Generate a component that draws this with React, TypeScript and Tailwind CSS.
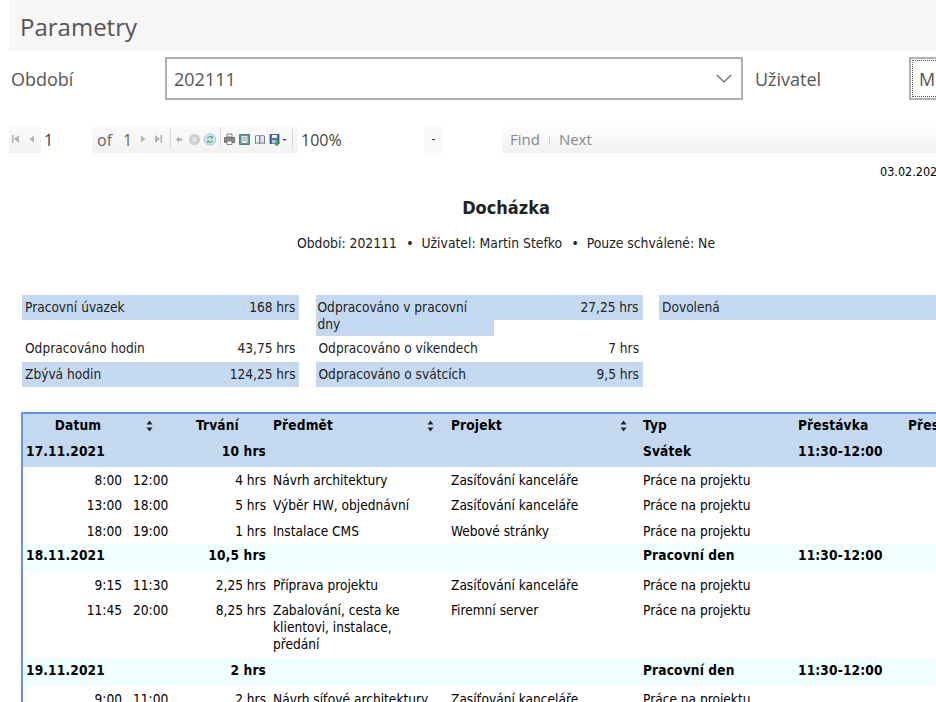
import { ReactNode } from 'react';

const reportFont = { fontFamily: '"DejaVu Sans Condensed", "DejaVu Sans", sans-serif' };

type Entry = {
  from: string;
  to: string;
  hours: string;
  subject: ReactNode;
  project: string;
  wrapped?: boolean;
};

type Day = {
  date: string;
  hours: string;
  type: string;
  pause: string;
  rowCls: string;
  cellPt: string;
  entries: Entry[];
};

const days: Day[] = [
  {
    date: '17.11.2021',
    hours: '10 hrs',
    type: 'Svátek',
    pause: '11:30-12:00',
    rowCls: 'bg-[#c4d9f0] h-[27px]',
    cellPt: 'pt-[3px]',
    entries: [
      { from: '8:00', to: '12:00', hours: '4 hrs', subject: 'Návrh architektury', project: 'Zasíťování kanceláře' },
      { from: '13:00', to: '18:00', hours: '5 hrs', subject: 'Výběr HW, objednávní', project: 'Zasíťování kanceláře' },
      { from: '18:00', to: '19:00', hours: '1 hrs', subject: 'Instalace CMS', project: 'Webové stránky' },
    ],
  },
  {
    date: '18.11.2021',
    hours: '10,5 hrs',
    type: 'Pracovní den',
    pause: '11:30-12:00',
    rowCls: 'bg-[#f0ffff] h-[28px]',
    cellPt: 'pt-[3px]',
    entries: [
      { from: '9:15', to: '11:30', hours: '2,25 hrs', subject: 'Příprava projektu', project: 'Zasíťování kanceláře' },
      {
        from: '11:45',
        to: '20:00',
        hours: '8,25 hrs',
        subject: 'Zabalování, cesta ke klientovi, instalace, předání',
        project: 'Firemní server',
        wrapped: true,
      },
    ],
  },
  {
    date: '19.11.2021',
    hours: '2 hrs',
    type: 'Pracovní den',
    pause: '11:30-12:00',
    rowCls: 'bg-[#f0ffff] h-[28px]',
    cellPt: 'pt-[4px]',
    entries: [
      { from: '9:00', to: '11:00', hours: '2 hrs', subject: 'Návrh síťové architektury', project: 'Zasíťování kanceláře' },
    ],
  },
];

function SortIcon() {
  return (
    <svg width="7" height="12" viewBox="0 0 7 12" className="inline-block">
      <path d="M3.500 0.500 L6.500 4.500 H0.500 Z M0.500 7.500 H6.500 L3.500 11.500 Z" fill="#222" />
    </svg>
  );
}

function Sep() {
  return <div className="w-px h-[20px] bg-[#d8d8d8]" />;
}

function ToolbarIcons() {
  return (
    <svg width="289" height="27" viewBox="0 0 289 27" className="absolute left-0 top-0">
      <g fill="#b4b4b4">
        <path d="M3 9h1.600v8H3z M10 9v8l-5-4z" />
        <path d="M25 9.500v7l-4.500-3.500z" />
        <path d="M132 9.500v7l4.500-3.500z" />
        <path d="M146 9v8l5-4z M151.500 9h1.600v8h-1.600z" />
      </g>
      <path d="M167 13.500l3-3v2h3v2h-3v2z" fill="#a9a9a9" />
      <circle cx="185.500" cy="13.500" r="5.500" fill="#cfcfcf" />
      <path d="M183.500 11.500l4 4m0-4l-4 4" stroke="#f2f2f2" strokeWidth="1.200" />
      <circle cx="201" cy="13.500" r="5.700" fill="#d3e8f8" stroke="#8fbadb" strokeWidth="0.800" />
      <path d="M198.300 12.500a3 3 0 0 1 4.900-1" fill="none" stroke="#4fae5a" strokeWidth="1.100" />
      <path d="M204 9.800v2.800h-2.800z" fill="#4fae5a" />
      <path d="M203.700 14.500a3 3 0 0 1-4.900 1" fill="none" stroke="#4fae5a" strokeWidth="1.100" />
      <path d="M198 17.200v-2.800h2.800z" fill="#4fae5a" />
      <path d="M218 8h5v3h-5z" fill="#f4f4f4" stroke="#6d6d6d" strokeWidth="0.800" />
      <path d="M215.500 11.500h10v5h-10z" fill="#8a8a8a" stroke="#5e5e5e" strokeWidth="0.800" />
      <path d="M218 15h5v3.500h-5z" fill="#fff" stroke="#6d6d6d" strokeWidth="0.800" />
      <path d="M230.500 8.500h10v10h-10z" fill="#5f9c8d" stroke="#4a7f8d" />
      <path d="M232.500 10h6v7h-6z" fill="#dfe7ea" />
      <path d="M233.500 11.500h4m-4 1.500h4m-4 1.500h4" stroke="#8aa0aa" strokeWidth="0.600" />
      <path d="M246.500 10c1.500-.7 3-.7 4.300 0v7.500c-1.300-.7-2.800-.7-4.300 0z" fill="#f2f2f2" stroke="#66707a" strokeWidth="0.900" />
      <path d="M250.800 10c1.300-.7 3-.7 4.700 0v7.500c-1.700-.7-3.400-.7-4.700 0z" fill="#e2e6ea" stroke="#66707a" strokeWidth="0.900" />
      <path d="M261 8.500h9v9h-9z" fill="#4a6db2" stroke="#2f4a86" strokeWidth="0.800" />
      <path d="M263 9h5v3h-5z" fill="#e8edf5" />
      <path d="M263 14h5v3.400h-5z" fill="#b9c7df" />
      <path d="M266.500 14.500h2.500v2.500h2l-3.200 3.300-3.300-3.300h2z" fill="#3ea23e" />
      <path d="M273.500 13h4l-2 2z" fill="#333" />
    </svg>
  );
}

function Toolbar() {
  const textCls = 'text-[16px] text-[#444]';
  return (
    <div
      className="flex h-[27px] mt-[26px] ml-[9px] w-[1000px]"
      style={{ fontFamily: '"Open Sans", sans-serif' }}
    >
      <div className="relative w-[289px] h-full bg-gradient-to-b from-[#fafafa] to-[#f2f2f2]">
        <ToolbarIcons />
        <div className={`absolute left-[32px] top-0 w-[51px] h-full bg-white pl-[3px] leading-[29px] ${textCls}`}>1</div>
        <span className={`absolute left-[88px] top-0 leading-[29px] ${textCls} text-[#666]`}>of</span>
        <span className={`absolute left-[114px] top-0 leading-[29px] ${textCls} text-[#666]`}>1</span>
        <div className="absolute left-[161px] top-[3px]"><Sep /></div>
        <div className="absolute left-[211px] top-[1px]"><Sep /></div>
        <div className="absolute left-[283px] top-[3px]"><Sep /></div>
      </div>
      <div className={`w-[126px] pl-[3px] leading-[29px] ${textCls}`}>100%</div>
      <div className="w-[19px] h-full bg-[#f9f9f9] flex items-center justify-center">
        <div className="w-[3px] h-px bg-[#333]" />
      </div>
      <div className="w-[59px]" />
      <div className="flex-1 h-full bg-gradient-to-b from-[#fdfdfd] to-[#f1f1f1] flex items-center pl-[8px] text-[15px] text-[#888]">
        <span>Find</span>
        <div className="w-px h-[8px] bg-[#ccc] mx-[9px]" />
        <span>Next</span>
      </div>
    </div>
  );
}

function PlainCell({ label, value }: { label: string; value: string }) {
  return (
    <div className="flex justify-between pl-[3px] pr-[3.500px] pt-[4px] leading-[17px]">
      <span>{label}</span>
      <span>{value}</span>
    </div>
  );
}

function BlueCell({ label, value }: { label: string; value?: string }) {
  return (
    <div className="flex justify-between h-[25px] bg-[#c4d9f0] pl-[3px] pr-[3.500px] pt-[4px] leading-[17px]">
      <span>{label}</span>
      {value && <span>{value}</span>}
    </div>
  );
}

function Summary() {
  return (
    <div className="grid grid-cols-[277px_327px_277px] grid-rows-[41px_26px_25px] gap-x-[16.500px] mt-[43px] ml-[22px] text-[13.600px] text-[#222]">
      <BlueCell label="Pracovní úvazek" value="168 hrs" />
      <div className="flex items-start">
        <div className="w-[178px] h-[41px] bg-[#c4d9f0] pl-[2px] pr-[3px] pt-[4px] leading-[17px]">
          Odpracováno v pracovní dny
        </div>
        <div className="flex-1 h-[25px] bg-[#c4d9f0] pr-[4px] pt-[4px] leading-[17px] text-right">27,25 hrs</div>
      </div>
      <BlueCell label="Dovolená" />
      <PlainCell label="Odpracováno hodin" value="43,75 hrs" />
      <PlainCell label="Odpracováno o víkendech" value="7 hrs" />
      <div />
      <BlueCell label="Zbývá hodin" value="124,25 hrs" />
      <BlueCell label="Odpracováno o svátcích" value="9,5 hrs" />
      <div />
    </div>
  );
}

function DayRows({ day }: { day: Day }) {
  return (
    <>
      <tr className={`${day.rowCls} font-bold tracking-[0.15px] align-top`}>
        <td colSpan={2} className={`pl-[3px] ${day.cellPt}`}>{day.date}</td>
        <td className={`text-right pr-[4px] ${day.cellPt}`}>{day.hours}</td>
        <td />
        <td />
        <td className={`pl-[3px] ${day.cellPt}`}>{day.type}</td>
        <td className={`pl-[3px] ${day.cellPt}`}>{day.pause}</td>
        <td />
      </tr>
      {day.entries.map((e, i) => (
        <tr key={i} className="align-top">
          <td className={`text-right pr-[11px] pt-[4.500px] ${i === day.entries.length - 1 ? 'pb-[4.500px]' : 'pb-[4px]'}`}>{e.from}</td>
          <td className="pt-[4.500px]">{e.to}</td>
          <td className="text-right pr-[4px] pt-[4.500px]">{e.hours}</td>
          <td className={`pl-[3px] pr-[13px] pt-[4.500px] ${e.wrapped ? 'pb-[5px]' : 'pb-[4px]'}`}>{e.subject}</td>
          <td className="pl-[4px] pt-[4.500px]">{e.project}</td>
          <td className="pl-[3px] pt-[4.500px]">Práce na projektu</td>
          <td />
          <td />
        </tr>
      ))}
    </>
  );
}

function AttendanceTable() {
  return (
    <div className="mt-[25px] ml-[21px] w-[1000px] border-l-2 border-t-2 border-[#6495ed]">
      <table className="table-fixed w-[998px] border-collapse text-[13.600px] leading-[17px] text-black">
        <colgroup>
          <col className="w-[110px]" />
          <col className="w-[32px]" />
          <col className="w-[105px]" />
          <col className="w-[177px]" />
          <col className="w-[193px]" />
          <col className="w-[155px]" />
          <col className="w-[110px]" />
          <col className="w-[116px]" />
        </colgroup>
        <thead>
          <tr className="bg-[#c4d9f0] font-bold tracking-[0.15px] h-[26px] align-top">
            <th className="text-center font-bold pt-[3px]">Datum</th>
            <th className="text-center pt-[3px]"><SortIcon /></th>
            <th className="text-center font-bold pt-[3px]">Trvání</th>
            <th className="font-bold text-left pl-[3px] pr-[13px] pt-[3px]">
              <div className="flex justify-between items-center">Předmět<SortIcon /></div>
            </th>
            <th className="font-bold text-left pl-[4px] pr-[13px] pt-[3px]">
              <div className="flex justify-between items-center">Projekt<SortIcon /></div>
            </th>
            <th className="font-bold text-left pl-[3px] pt-[3px]">Typ</th>
            <th className="font-bold text-left pl-[3px] pt-[3px]">Přestávka</th>
            <th className="font-bold text-left pl-[3px] pt-[3px]">Přestávka</th>
          </tr>
        </thead>
        <tbody>
          {days.map((d) => <DayRows key={d.date} day={d} />)}
        </tbody>
      </table>
    </div>
  );
}

export default function App() {
  return (
    <main className="w-[936px] h-[702px] overflow-hidden bg-white">
      <div
        className="ml-[9px] w-[927px] h-[51px] bg-[#f7f7f7] pl-[11px] pt-[9px] text-[24px] leading-[36px] text-[#555]"
        style={{ fontFamily: '"Open Sans", sans-serif' }}
      >
        Parametry
      </div>

      <div
        className="flex items-center w-[1100px] mt-[6px] h-[43px] text-[18px] text-[#555]"
        style={{ fontFamily: '"Open Sans", sans-serif' }}
      >
        <div className="w-[165px] pl-[11px] pt-[2px]">Období</div>
        <div className="w-[578px] h-full border-2 border-[#b0b0b0] flex items-center justify-between pl-[7px] pr-[9px]">
          <span className="pt-px">202111</span>
          <svg width="16" height="9" viewBox="0 0 16 9">
            <path d="M1 1l7 7 7-7" fill="none" stroke="#666" strokeWidth="1.200" />
          </svg>
        </div>
        <div className="w-[166px] pl-[12px] pt-[2px]">Uživatel</div>
        <div className="w-[190px] h-full border-2 border-[#b0b0b0] p-px">
          <div className="h-full border border-dotted border-[#555] pl-[6px] pt-px flex items-center">Martin Stefko</div>
        </div>
      </div>

      <Toolbar />

      <section style={reportFont} className="w-[1100px]">
        <div className="pl-[880px] pt-[10px] text-[12.500px] leading-[17px] text-black">03.02.2021</div>
        <h1 className="w-[1012px] text-center font-bold text-[18px] leading-[22px] mt-[17px] text-[#222]">Docházka</h1>
        <p className="w-[1012px] text-center text-[13.800px] leading-[17px] mt-[16px] text-[#222]">
          Období: 202111&nbsp; <span className="ml-[1.500px]">•</span>&nbsp; Uživatel: Martin Stefko&nbsp; <span className="ml-[1.500px]">•</span>&nbsp; Pouze schválené: Ne
        </p>
        <Summary />
        <AttendanceTable />
      </section>
    </main>
  );
}
